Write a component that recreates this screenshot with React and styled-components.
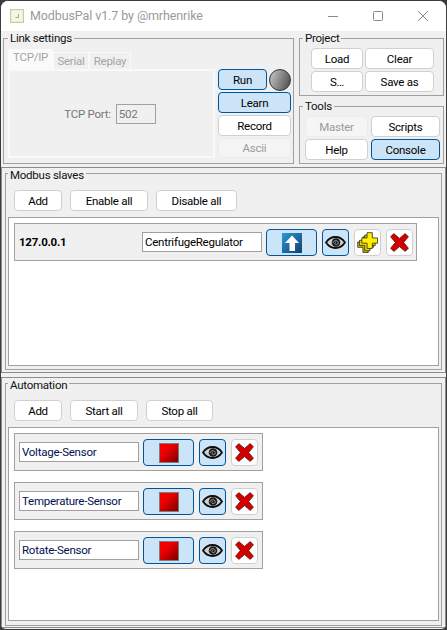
import React from "react";
import styled, { createGlobalStyle } from "styled-components";

const Global = createGlobalStyle`
  html, body { margin: 0; padding: 0; background: #3a3a3a; }
  * { box-sizing: border-box; }
  #root { width: 447px; height: 630px; }
`;
const Win = styled.div`
  width: 447px; height: 630px; background: #f0f0f0; border: 1px solid #3c3c3c; border-radius: 8px 8px 6px 6px; overflow: hidden;
  display: flex; flex-direction: column; color: #000;
  font: 11.5px/14px Roboto, sans-serif; letter-spacing: -0.25px;
`;
const TitleBar = styled.div`
  height: 30px; flex: none; background: #fff; display: flex; align-items: center; padding: 0 18px 0 9px; color: #9a9a9a; font-size: 12.5px; letter-spacing: -0.1px;
`;
const TitleText = styled.span` margin-left: 6px; flex: 1; `;
const Controls = styled.div` display: flex; gap: 35px; align-items: center; `;
const TopRow = styled.div` height: 133px; flex: none; display: flex; gap: 5px; padding: 0 2px; `;
const Group = styled.fieldset`
  margin: 0; min-width: 0; border: 1px solid #a0a0a0; height: ${p => p.$h}px; width: ${p => (p.$w ? `${p.$w}px` : "100%")}; flex: none;
  padding: ${p => p.$pad};
`;
const Legend = styled.legend`
  padding: 0 2px; margin-left: ${p => p.$x || 0}px; line-height: 14px; height: ${p => (p.$low ? 10 : 14)}px; color: #111;
`;
const LinkBody = styled.div` display: flex; gap: 3px; `;
const TabsBox = styled.div` width: 207px; `;
const TabStrip = styled.div` display: flex; align-items: flex-end; height: 20px; `;
const Tab = styled.div`
  height: ${p => (p.$on ? 20 : 17)}px; width: ${p => p.$w}px; background: ${p => (p.$on ? "#fafafa" : "#f0f0f0")};
  border: 1px solid #fafafa; border-bottom: 0; color: #a4a4a4; text-align: center; line-height: ${p => (p.$on ? 15 : 17)}px;
`;
const TabPane = styled.div`
  height: 89px; border: 2px solid #f9f9f9; display: flex; align-items: center; justify-content: center; gap: 5px; color: #777; padding-right: 3px;
`;
const PortInput = styled.div`
  width: 40px; height: 20px; border: 1px solid #a0a0a0; color: #777; padding-left: 2px; line-height: 18px;
`;
const RunColumn = styled.div` width: 73px; margin-top: 20px; display: flex; flex-direction: column; gap: 2px; `;
const RunRow = styled.div` display: flex; gap: 2px; align-items: center; height: 21px; `;
const Led = styled.div`
  width: 22px; height: 22px; flex: none; border-radius: 50%; border: 1px solid #333; background: linear-gradient(110deg, #c8c8c8, #4a4a4a);
`;
const Btn = styled.button`
  display: flex; align-items: center; justify-content: center; padding: 0; margin: 0; font: inherit; letter-spacing: inherit;
  width: ${p => (p.$w ? `${p.$w}px` : "100%")}; height: ${p => p.$h || 21}px; flex: none;
  border-radius: 4px; border: 1px solid ${p => (p.$on ? "#005499" : p.disabled ? "#ececec" : "#d0d0d0")};
  background: ${p => (p.$on ? "#cce4f7" : p.disabled ? "#f5f5f5" : "#fff")};
  color: ${p => (p.disabled ? "#9b9b9b" : "#000")};
`;
const ButtonGrid = styled.div`
  display: grid; grid-template-columns: ${p => p.$cols}; gap: 2px ${p => p.$gap}px;
`;
const SideColumn = styled.div` display: flex; flex-direction: column; gap: 3px; `;
const Panel = styled.div`
  flex: none; height: ${p => p.$h}px; margin: ${p => p.$m}; border: 1px solid #8c8c8c; padding: 0 3px;
`;
const Toolbar = styled.div` display: flex; gap: 8px; margin-left: 6px; `;
const ListBox = styled.div`
  margin-top: 6px; height: ${p => p.$h}px; background: #fff; border: 1px solid #a0a0a0; padding: 5px; display: flex; flex-direction: column; gap: 11px; align-items: flex-start;
`;
const Row = styled.div`
  width: ${p => p.$w}px; height: 38px; flex: none; background: #f0f0f0; border: 1px solid #a0a0a0; display: flex; align-items: flex-start; padding: 5px 0 0 4px;
`;
const Addr = styled.b` width: 123px; font-weight: 700; flex: none; line-height: 27px; `;
const NameField = styled.div`
  width: 120px; height: 20px; flex: none; background: #fff; border: 1px solid #a0a0a0; line-height: 18px; padding-left: 2px; margin: 3px 4px 0 0; color: ${p => p.$c || "#000"};
  overflow: hidden; white-space: nowrap;
`;
const Actions = styled.div` display: flex; gap: 5px; `;

const Minimize = () => <svg width="10" height="10"><path d="M0 5.5h10" stroke="#8a8a8a" /></svg>;
const Maximize = () => <svg width="10" height="10"><rect x=".5" y=".5" width="9" height="9" rx="1" fill="none" stroke="#8a8a8a" /></svg>;
const Close = () => <svg width="10" height="10"><path d="M0 0l10 10M10 0L0 10" stroke="#8a8a8a" /></svg>;
const AppIcon = () => (
  <svg width="14" height="14"><rect x=".5" y=".5" width="13" height="13" fill="#f4f7e6" stroke="#c3d29b" strokeWidth="1.4" /><path d="M8.5 5v3.5H5.5" fill="none" stroke="#9db46b" /></svg>
);
const UpIcon = () => (
  <svg width="20" height="20" viewBox="0 0 20 20">
    <defs><linearGradient id="ug" x1="0" y1="0" x2="1" y2="1"><stop offset="0" stopColor="#2e9ad8" /><stop offset="1" stopColor="#123f6e" /></linearGradient></defs>
    <rect width="20" height="20" fill="url(#ug)" />
    <path d="M10 2.5l7 7.5h-4v8H7.500v-8H3z" fill="#fff" />
  </svg>
);
const Eye = () => (
  <svg width="21" height="13" viewBox="0 0 21 13">
    <path d="M1 6.500C4 2 7.500 1 10.500 1s6.500 1 9.500 5.500C17 11 13.500 12 10.500 12S4 11 1 6.500z" fill="#cfd3d6" stroke="#0c0c0c" strokeWidth="1.8" />
    <circle cx="11" cy="6.500" r="4.300" fill="#1b1b1b" />
    <path d="M8 7c.3-2 2.800-3 4.400-1.800s1 3.300-.9 3.400-2-1.800-.8-2.100" fill="none" stroke="#a8a8a8" strokeWidth=".9" />
  </svg>
);
const plusPath = "M6 0h6v6h6v6h-6v6H6v-6H0V6h6z";
const Plus = () => (
  <svg width="21" height="21" viewBox="0 0 24 24">
    <path d={plusPath} transform="translate(.8 5.500)" fill="#d9c400" stroke="#3a3a20" />
    <path d={plusPath} transform="translate(2.800 3.500)" fill="#e7d400" stroke="#3a3a20" />
    <path d={plusPath} transform="translate(5.500 .8)" fill="#fff200" stroke="#3a3a20" />
  </svg>
);
const Cross = () => (
  <svg width="19" height="19" viewBox="0 0 19 19">
    <path d="M3.800.6L9.500 5.400 15.200.6l3.200 3.200-4.800 5.700 4.800 5.700-3.200 3.200-5.700-4.800-5.700 4.800-3.200-3.200 4.800-5.700L.6 3.800z" fill="#d40000" stroke="#5a1010" strokeWidth=".8" />
  </svg>
);
const Stop = ({ id }) => (
  <svg width="20" height="20" viewBox="0 0 20 20">
    <defs><linearGradient id={id} x1="0" y1="0" x2="1" y2="1"><stop offset=".35" stopColor="#f00000" /><stop offset="1" stopColor="#750000" /></linearGradient></defs>
    <rect x=".5" y=".5" width="19" height="19" fill={`url(#${id})`} stroke="#7d7d7d" />
  </svg>
);

const sensors = ["Voltage-Sensor", "Temperature-Sensor", "Rotate-Sensor"];

function ToolsColumn() {
  return (
    <SideColumn>
      <Group $w={145} $h={65} $pad="3px 0 0 11px">
        <Legend $x={-8}>Project</Legend>
        <ButtonGrid $cols="52px 69px" $gap={2}>
          <Btn>Load</Btn><Btn>Clear</Btn><Btn>S…</Btn><Btn>Save as</Btn>
        </ButtonGrid>
      </Group>
      <Group $w={145} $h={65} $pad="3px 0 0 5px">
        <Legend $x={-2}>Tools</Legend>
        <ButtonGrid $cols="63px 69px" $gap={3}>
          <Btn disabled>Master</Btn><Btn>Scripts</Btn><Btn>Help</Btn><Btn $on>Console</Btn>
        </ButtonGrid>
      </Group>
    </SideColumn>
  );
}

export default function App() {
  return (
    <Win>
      <Global />
      <TitleBar>
        <AppIcon />
        <TitleText>ModbusPal v1.7 by @mrhenrike</TitleText>
        <Controls><Minimize /><Maximize /><Close /></Controls>
      </TitleBar>
      <TopRow>
        <Group $w={291} $h={133} $pad="4px 2px 0 4px">
          <Legend>Link settings</Legend>
          <LinkBody>
            <TabsBox>
              <TabStrip>
                <Tab $on $w={45}>TCP/IP</Tab>
                <Tab $w={36}>Serial</Tab>
                <Tab $w={42}>Replay</Tab>
              </TabStrip>
              <TabPane>TCP Port: <PortInput>502</PortInput></TabPane>
            </TabsBox>
            <RunColumn>
              <RunRow><Btn $on $w={49}>Run</Btn><Led /></RunRow>
              <Btn $on>Learn</Btn>
              <Btn>Record</Btn>
              <Btn disabled $h={20}>Ascii</Btn>
            </RunColumn>
          </LinkBody>
        </Group>
        <ToolsColumn />
      </TopRow>
      <Panel $h={206} $m="3px 0 4px">
        <Group $h={202} $pad="12px 2px 0">
          <Legend $low>Modbus slaves</Legend>
          <Toolbar>
            <Btn $w={48}>Add</Btn>
            <Btn $w={78}>Enable all</Btn>
            <Btn $w={81}>Disable all</Btn>
          </Toolbar>
          <ListBox $h={149}>
            <Row $w={403}>
              <Addr>127.0.0.1</Addr>
              <NameField>CentrifugeRegulator</NameField>
              <Actions>
                <Btn $on $w={51} $h={27}><UpIcon /></Btn>
                <Btn $on $w={27} $h={27}><Eye /></Btn>
                <Btn $w={27} $h={27}><Plus /></Btn>
                <Btn $w={27} $h={27}><Cross /></Btn>
              </Actions>
            </Row>
          </ListBox>
        </Group>
      </Panel>
      <Panel $h={251} $m="0">
        <Group $h={248} $pad="12px 2px 0">
          <Legend $low>Automation</Legend>
          <Toolbar>
            <Btn $w={48}>Add</Btn>
            <Btn $w={68}>Start all</Btn>
            <Btn $w={67}>Stop all</Btn>
          </Toolbar>
          <ListBox $h={194}>
            {sensors.map((s, i) => (
              <Row key={s} $w={249}>
                <NameField $c="#001050">{s}</NameField>
                <Actions>
                  <Btn $on $w={51} $h={27}><Stop id={`s${i}`} /></Btn>
                  <Btn $on $w={27} $h={27}><Eye /></Btn>
                  <Btn $w={27} $h={27}><Cross /></Btn>
                </Actions>
              </Row>
            ))}
          </ListBox>
        </Group>
      </Panel>
    </Win>
  );
}
